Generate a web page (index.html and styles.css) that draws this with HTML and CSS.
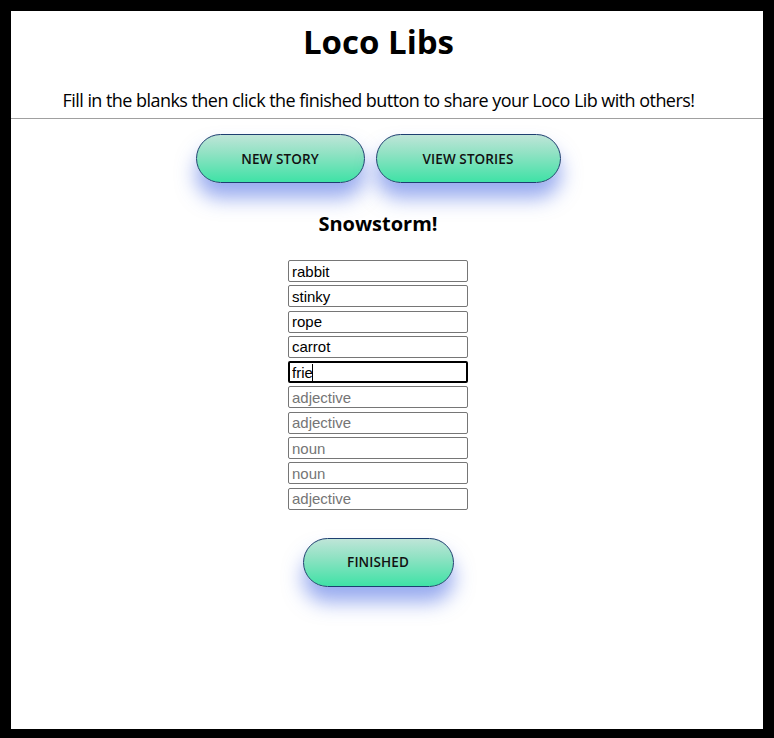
FILE: index.html
```html
<!DOCTYPE html>
<html lang="en">
<head>
<meta charset="utf-8">
<title>Loco Libs</title>
<link rel="stylesheet" href="styles.css">
</head>
<body>
<div class="frame">
  <header class="header">
    <h1 class="title">Loco Libs</h1>
    <p class="subtitle">Fill in the blanks then click the finished button to share your Loco Lib with others!</p>
  </header>
  <hr class="divider">
  <main class="main">
    <nav class="nav">
      <button class="pill pill-new">NEW STORY</button>
      <button class="pill pill-view">VIEW STORIES</button>
    </nav>
    <h2 class="story-title">Snowstorm!</h2>
    <form class="blanks">
      <input class="blank" type="text" value="rabbit" placeholder="noun">
      <input class="blank" type="text" value="stinky" placeholder="adjective">
      <input class="blank" type="text" value="rope" placeholder="noun">
      <input class="blank" type="text" value="carrot" placeholder="noun">
      <span class="blank-wrap"><input class="blank blank-focus" type="text" value="frie" placeholder="noun"><span class="caret"></span></span>
      <input class="blank" type="text" placeholder="adjective">
      <input class="blank" type="text" placeholder="adjective">
      <input class="blank" type="text" placeholder="noun">
      <input class="blank" type="text" placeholder="noun">
      <input class="blank" type="text" placeholder="adjective">
    </form>
    <button class="pill pill-finish">FINISHED</button>
  </main>
</div>
</body>
</html>
```
FILE: styles.css
```css
html, body {
  margin: 0;
  padding: 0;
  background: #000;
}
body {
  font-family: "Open Sans", "Noto Sans", sans-serif;
  color: #000;
}
.frame {
  box-sizing: border-box;
  width: 774px;
  height: 738px;
  border-style: solid;
  border-color: #000;
  border-width: 11px 11px 9px 11px;
  background: #fff;
  overflow: hidden;
}
.header {
  padding-right: 17px;
  text-align: center;
}
.title {
  margin: 0;
  padding-top: 9px;
  font-size: 33px;
  line-height: 44px;
  font-weight: 700;
  letter-spacing: 0;
}
.subtitle {
  margin: 24px 0 0 0;
  font-size: 18px;
  line-height: 24px;
  letter-spacing: -0.55px;
}
.divider {
  margin: 6px 0 0 0;
  border: 0;
  height: 1px;
  background: #a0a0a0;
}
.main {
  padding-right: 18px;
  display: flex;
  flex-direction: column;
  align-items: center;
}
.nav {
  display: flex;
  gap: 11px;
  margin-top: 15px;
}
.pill {
  box-sizing: border-box;
  height: 49px;
  border: 1px solid #1d3f70;
  border-radius: 25px;
  background: linear-gradient(to bottom, #bfe5d8 0%, #8fe2c3 40%, #3fe2a6 100%);
  box-shadow: 0 15px 20px rgba(65, 100, 225, 0.55);
  font-family: "Open Sans", "Noto Sans", sans-serif;
  font-size: 13.5px;
  font-weight: 600;
  color: #111;
  letter-spacing: 0.1px;
  cursor: pointer;
}
.pill-new { width: 169px; }
.pill-view { width: 185px; }
.pill-finish { width: 151px; margin-top: 28px; }
.story-title {
  margin: 28px 0 0 0;
  font-size: 20px;
  line-height: 26px;
  font-weight: 700;
}
.blanks {
  margin-top: 23px;
  display: flex;
  flex-direction: column;
  gap: 3.3px;
  width: 180px;
}
.blank-wrap {
  position: relative;
  display: block;
}
.blank {
  box-sizing: border-box;
  display: block;
  width: 180px;
  height: 22px;
  margin: 0;
  padding: 1px 3px;
  border: 1px solid #767676;
  border-radius: 2px;
  font-family: "Liberation Sans", Arial, sans-serif;
  font-size: 15px;
  color: #000;
  background: #fff;
  outline: none;
}
.blank::placeholder {
  color: #757575;
}
.blank-focus {
  border: 2px solid #000;
  padding: 0 2px;
}
.caret {
  position: absolute;
  left: 24px;
  top: 3px;
  width: 1px;
  height: 17px;
  background: #000;
}
```
